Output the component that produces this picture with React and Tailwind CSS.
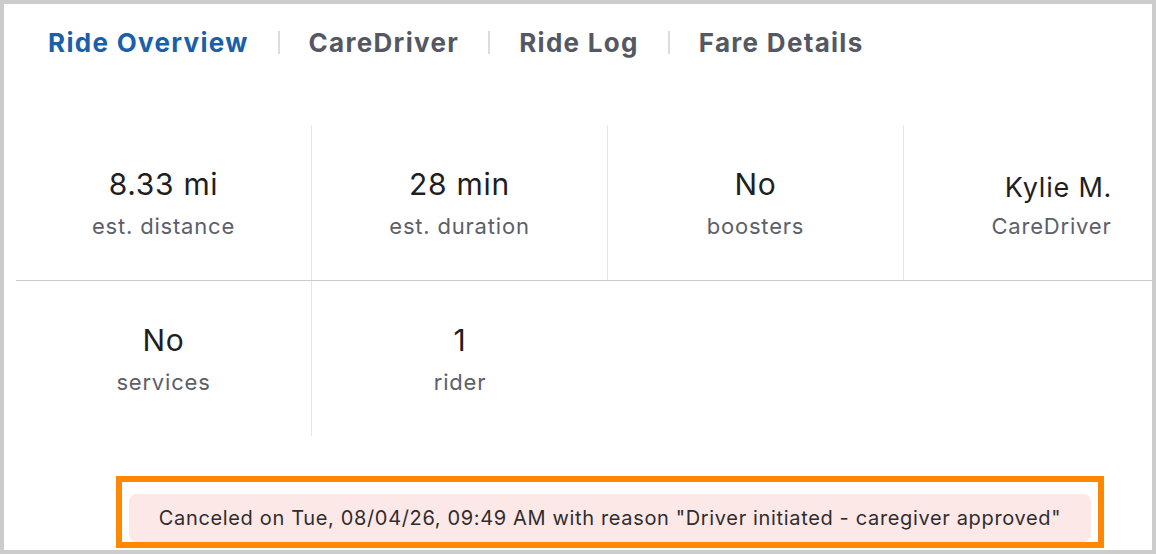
import React from "react";

const tabs = ["Ride Overview", "CareDriver", "Ride Log", "Fare Details"];

function Cell({ value, label, border = true, small = false }) {
  return (
    <div
      className={`w-[296px] h-[155px] shrink-0 flex flex-col items-center pt-[42px] ${
        border ? "border-r border-[#e2e6eb]" : ""
      }`}
    >
      <div
        className={`h-[34px] leading-[34px] text-[#1f1f1f] ${
          small ? "text-[27px] tracking-[0.8px] mt-[4px] pl-[14px]" : "text-[30px] tracking-[0.7px]"
        }`}
      >
        {value}
      </div>
      <div
        className={`${small ? "mt-[7px]" : "mt-[11px]"} text-[22px] leading-[28px] tracking-[0.8px] text-[#5c6069]`}
      >
        {label}
      </div>
    </div>
  );
}

export default function App() {
  return (
    <div className="w-[1156px] h-[554px] border-4 border-[#cccccc] bg-white overflow-hidden flex flex-col font-['Inter',sans-serif]">
      <div className="flex items-center h-[76px] pl-[44px] shrink-0">
        {tabs.map((t, i) => (
          <React.Fragment key={t}>
            {i > 0 && <span className="w-[2px] h-[23px] bg-[#dcdcdc] mx-[29px]" />}
            <span
              className={`text-[26px] font-bold tracking-[1.3px] ${
                i === 0 ? "text-[#1b5fa9]" : "text-[#545862]"
              }`}
            >
              {t}
            </span>
          </React.Fragment>
        ))}
      </div>
      <div className="h-[45px] shrink-0" />
      <div className="ml-[12px] w-[1185px] shrink-0">
        <div className="flex border-b border-[#c9ccd3]">
          <Cell value="8.33 mi" label="est. distance" />
          <Cell value="28 min" label="est. duration" />
          <Cell value="No" label="boosters" />
          <Cell value="Kylie M." label="CareDriver" small />
        </div>
        <div className="flex">
          <Cell value="No" label="services" />
          <Cell value="1" label="rider" border={false} />
        </div>
      </div>
      <div className="mt-[40px] ml-[112px] w-[988px] h-[72px] border-[6px] border-[#ff8800] pt-[12px] pl-[7px] shrink-0">
        <div className="w-[962px] h-[48px] rounded-[8px] bg-[#fde8e8] flex items-center justify-center text-[20px] tracking-[0.65px] text-[#2e2e2e]">
          Canceled on Tue, 08/04/26, 09:49 AM with reason "Driver initiated - caregiver approved"
        </div>
      </div>
    </div>
  );
}
